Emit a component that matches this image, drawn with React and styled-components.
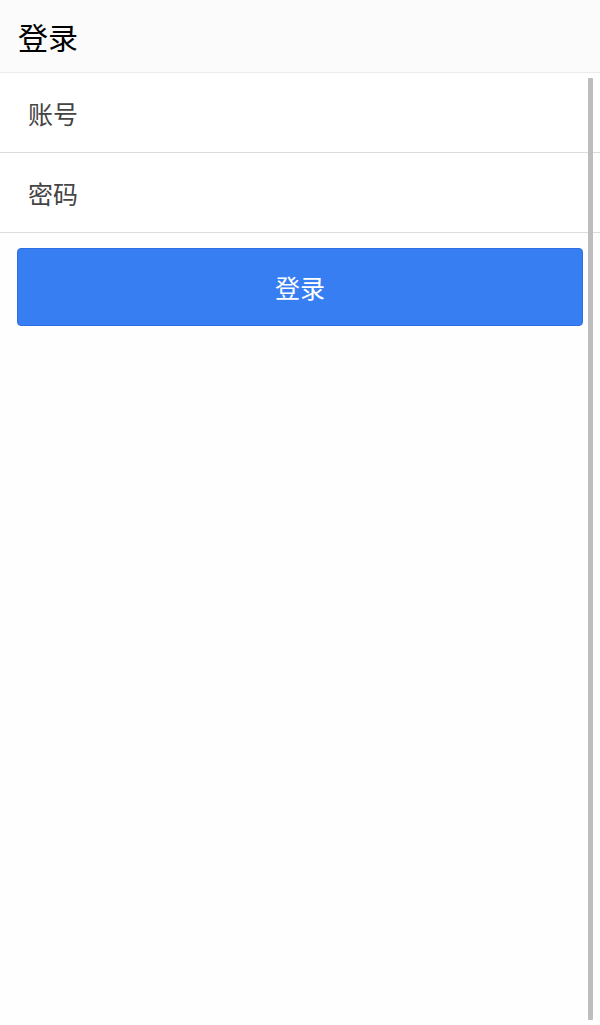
import React from "react";
import styled, { createGlobalStyle } from "styled-components";

const Global = createGlobalStyle`
  html, body { margin: 0; padding: 0; background: #fff; }
  body { font-family: "Noto Sans CJK SC", "Noto Sans", sans-serif; }
  * { box-sizing: border-box; }
`;

const Page = styled.div`
  position: relative;
  width: 600px;
  height: 1025px;
  background: #fefefe;
  overflow: hidden;
`;

const Header = styled.header`
  height: 73px;
  display: flex;
  align-items: center;
  padding-left: 18px;
  background: #fbfbfb;
  border-bottom: 1px solid #ececec;
`;

const Title = styled.h1`
  margin: 0;
  font-size: 30px;
  font-weight: 400;
  color: #000;
  line-height: 1;
`;

const Form = styled.div`
  display: flex;
  flex-direction: column;
`;

const Field = styled.label`
  height: 80px;
  display: flex;
  align-items: center;
  padding-left: 28px;
  border-bottom: 1px solid #dcdcdc;
  background: #fff;
`;

const Input = styled.input`
  border: none;
  outline: none;
  background: transparent;
  font-family: "Noto Sans CJK SC", "Noto Sans", sans-serif;
  font-size: 25px;
  color: #333;
  width: 100%;
  padding: 0;
  &::placeholder { color: #444; }
`;

const ButtonWrap = styled.div`
  padding: 15px 17px 0 17px;
`;

const Button = styled.button`
  width: 566px;
  height: 78px;
  border: 1px solid #2d6fe0;
  border-radius: 4px;
  background: #377ef2;
  color: #fff;
  font-family: "Noto Sans CJK SC", "Noto Sans", sans-serif;
  font-size: 25px;
  cursor: pointer;
`;

const Scrollbar = styled.div`
  position: absolute;
  left: 588px;
  top: 78px;
  width: 5px;
  height: 942px;
  background: #bdbdbd;
  border-radius: 1px;
`;

export default function App() {
  return (
    <>
      <Global />
      <Page>
        <Header>
          <Title>登录</Title>
        </Header>
        <Form>
          <Field>
            <Input placeholder="账号" />
          </Field>
          <Field>
            <Input type="password" placeholder="密码" />
          </Field>
          <ButtonWrap>
            <Button>登录</Button>
          </ButtonWrap>
        </Form>
        <Scrollbar />
      </Page>
    </>
  );
}
